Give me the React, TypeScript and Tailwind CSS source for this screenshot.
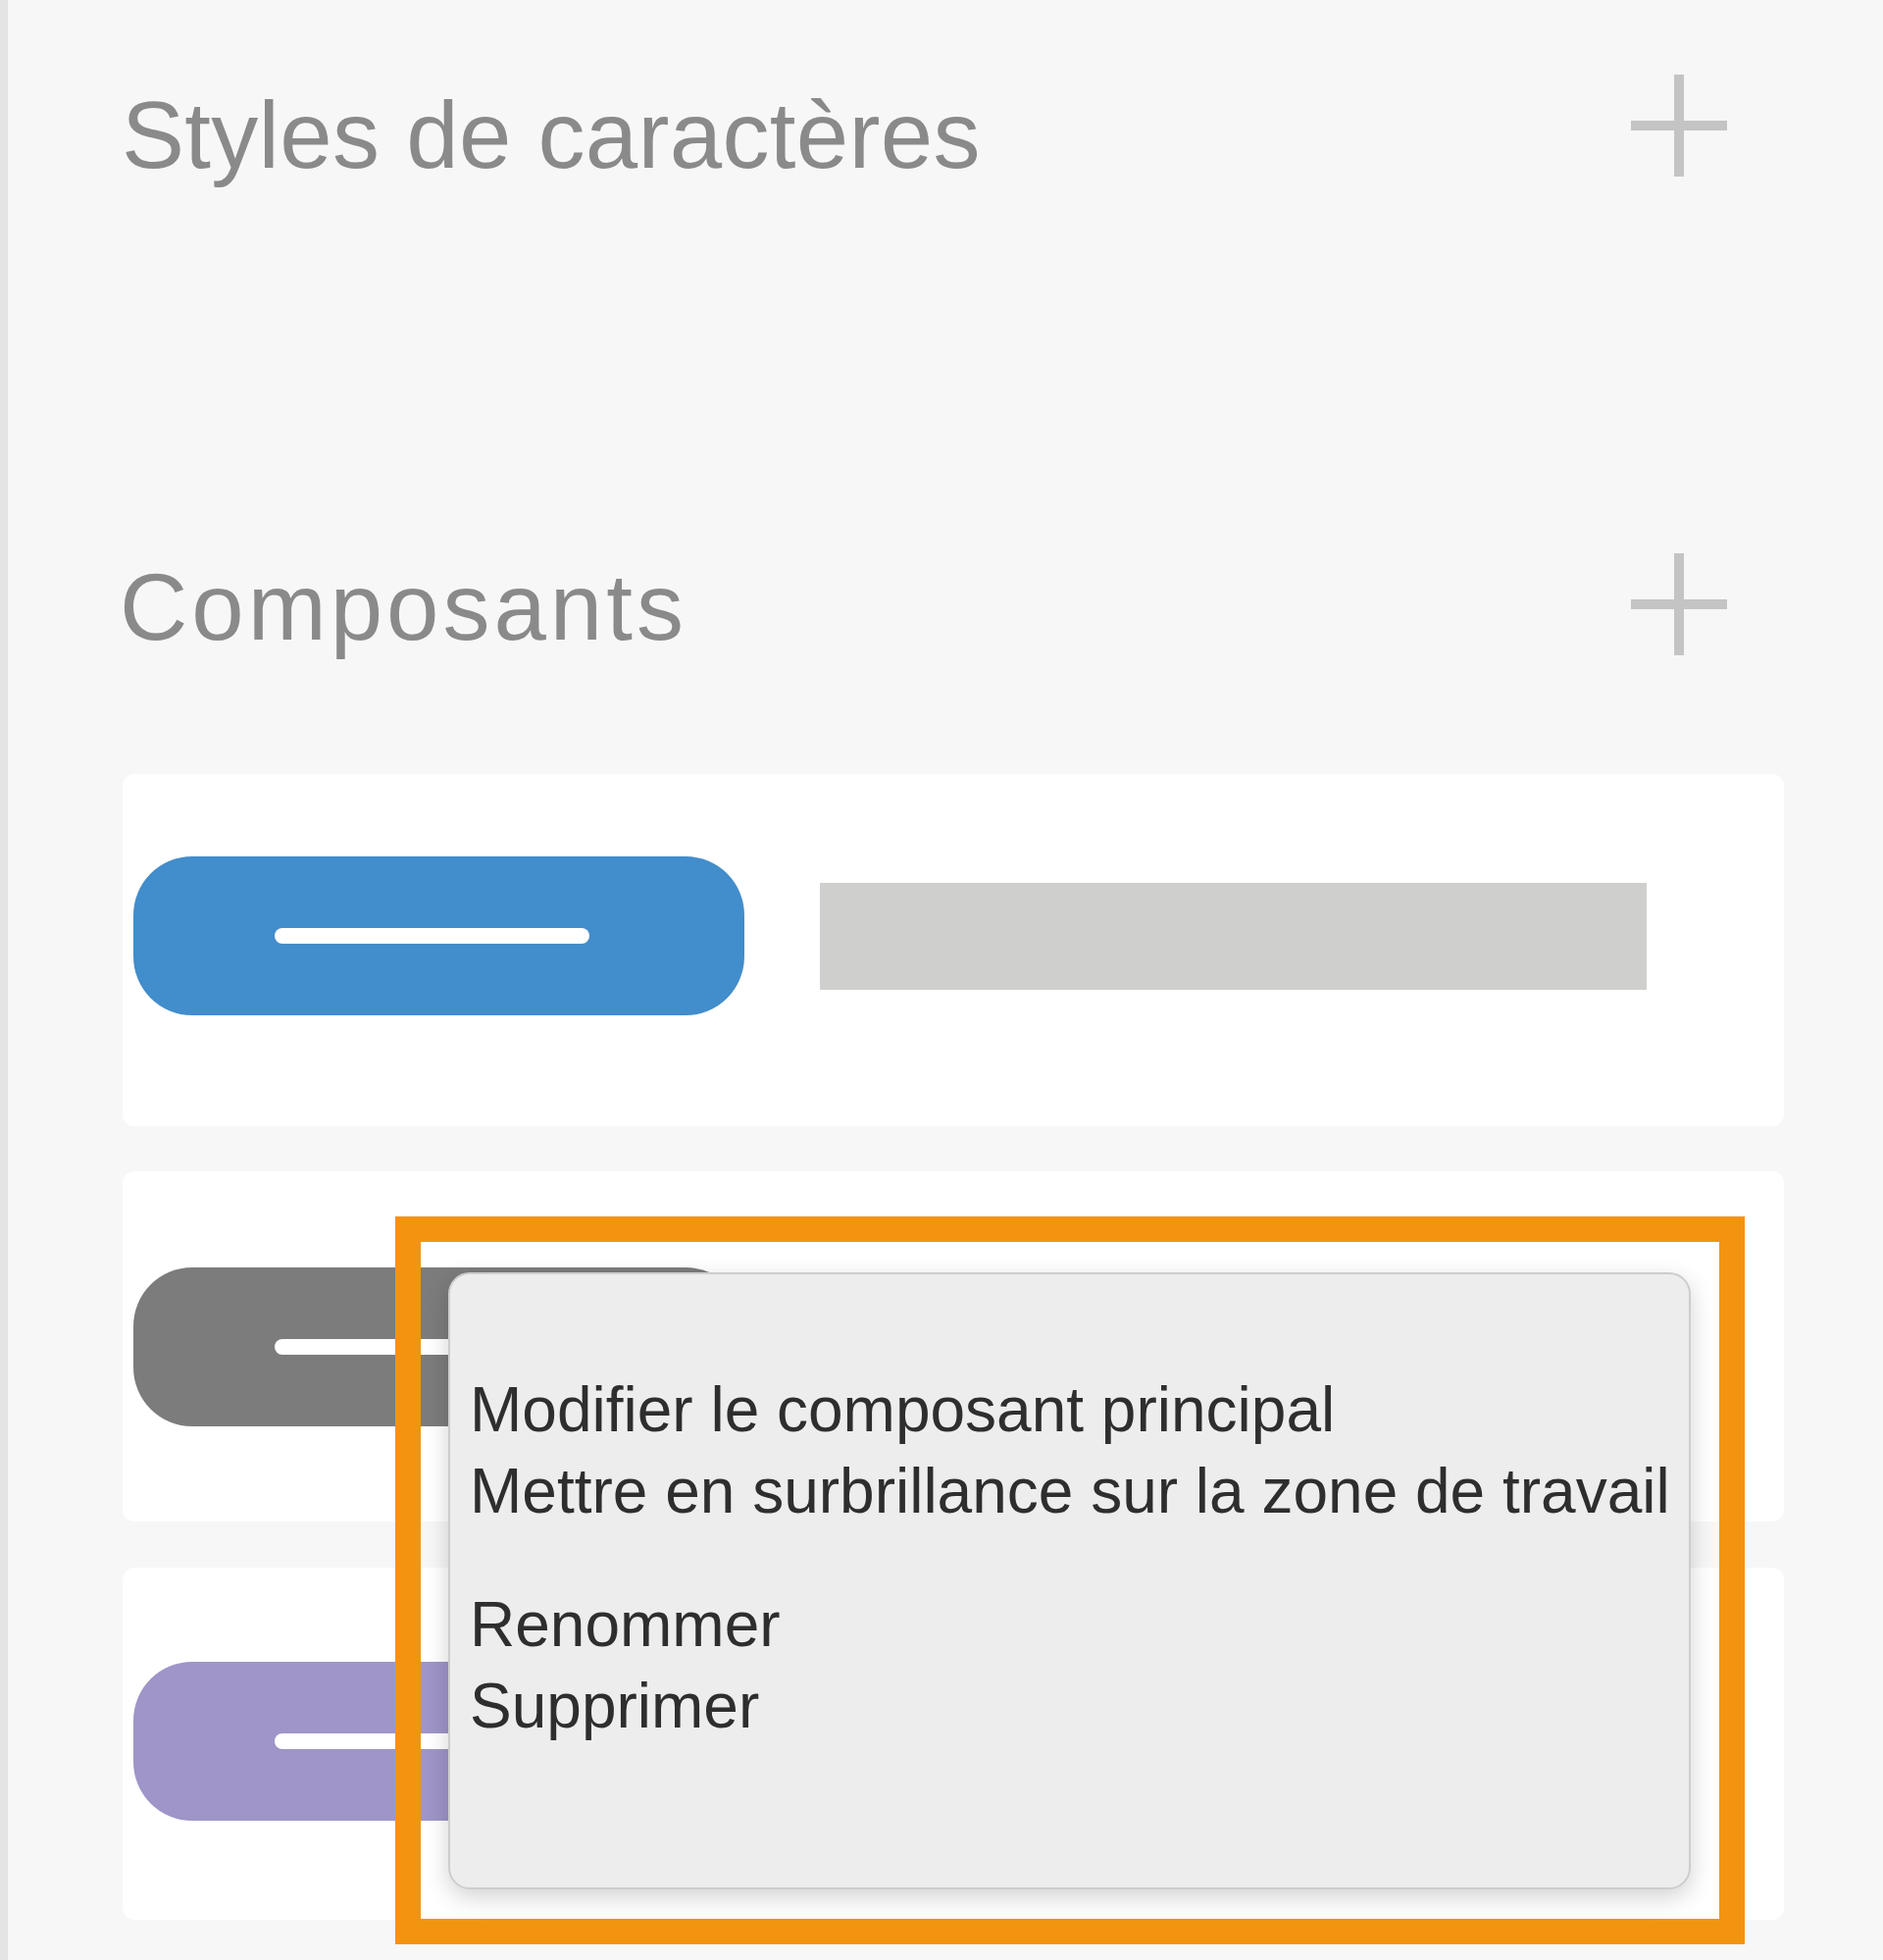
import React from "react";

function PlusIcon() {
  return (
    <svg width="98" height="104" viewBox="0 0 98 104" className="shrink-0">
      <line x1="49" y1="0" x2="49" y2="104" stroke="#c4c4c4" strokeWidth="10" />
      <line x1="0" y1="52" x2="98" y2="52" stroke="#c4c4c4" strokeWidth="10" />
    </svg>
  );
}

function ComponentCard({
  pill,
  pillTop,
  height,
}: {
  pill: string;
  pillTop: string;
  height: string;
}) {
  return (
    <div className={`w-[1694px] ${height} rounded-[12px] bg-white pl-[11px] ${pillTop}`}>
      <div className="flex items-center gap-[77px]">
        <div className={`flex h-[162px] w-[623px] items-center rounded-[60px] ${pill} pl-[144px]`}>
          <div className="h-[16px] w-[321px] rounded-full bg-white" />
        </div>
        <div className="h-[109px] w-[843px] bg-[#cfcfcd]" />
      </div>
    </div>
  );
}

export default function App() {
  return (
    <div className="relative h-[1998px] w-[1920px] overflow-hidden border-l-[8px] border-[#e4e4e4] bg-[#f7f7f7] font-['Liberation_Sans',Arial,sans-serif]">
      {/* Styles de caractères */}
      <div className="mt-[76px] flex h-[104px] items-start justify-between pl-[116px] pr-[159px]">
        <div className="mt-[14px] text-[96px] leading-none tracking-[0.3px] text-[#8a8a8a]">Styles de caractères</div>
        <PlusIcon />
      </div>

      {/* Composants */}
      <div className="mt-[384px] flex h-[104px] items-start justify-between pl-[114px] pr-[159px]">
        <div className="mt-[7px] text-[96px] leading-none tracking-[4px] text-[#8a8a8a]">Composants</div>
        <PlusIcon />
      </div>

      <div className="mt-[121px] flex flex-col pl-[117px]">
        <ComponentCard pill="bg-[#428dcb]" pillTop="pt-[84px]" height="h-[359px]" />
        <div className="mt-[46px]">
          <ComponentCard pill="bg-[#7b7c7b]" pillTop="pt-[98px]" height="h-[357px]" />
        </div>
        <div className="mt-[47px]">
          <ComponentCard pill="bg-[#9f95c8]" pillTop="pt-[96px]" height="h-[359px]" />
        </div>
      </div>

      {/* highlight frame */}
      <div className="absolute left-[395px] top-[1240px] h-[742px] w-[1376px] border-[26px] border-[#f39410]" />

      {/* context menu */}
      <div className="absolute left-[449px] top-[1297px] h-[629px] w-[1267px] rounded-[22px] border-2 border-[#cdcdcd] bg-[#ededed] pl-[20px] pt-[97px] text-[64px] leading-[83px] text-[#2e2e2e] shadow-[0_8px_24px_rgba(0,0,0,0.18)]">
        <div>Modifier le composant principal</div>
        <div>Mettre en surbrillance sur la zone de travail</div>
        <div className="mt-[53px]">Renommer</div>
        <div>Supprimer</div>
      </div>
    </div>
  );
}
